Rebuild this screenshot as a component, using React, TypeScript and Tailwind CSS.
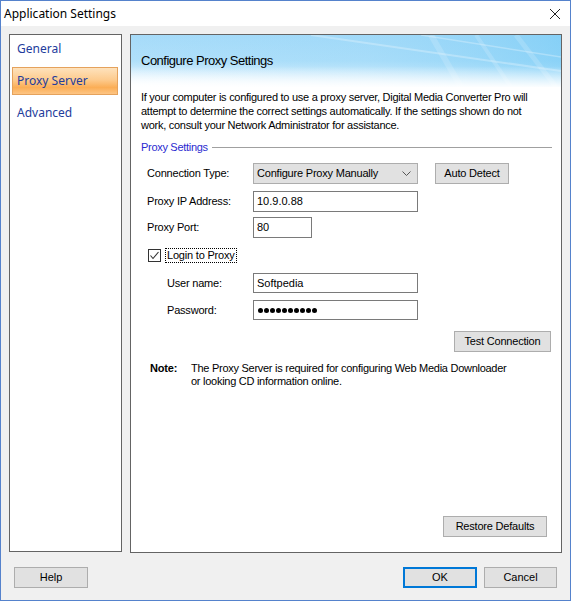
import React from "react";

const sans = { fontFamily: '"Liberation Sans", Arial, sans-serif' };
const ui = { fontFamily: '"Noto Sans", "Open Sans", sans-serif' };

function Btn({ children, className = "" }: { children: React.ReactNode; className?: string }) {
  return (
    <div
      className={`h-[21px] bg-[#e1e1e1] border border-[#adadad] flex items-center justify-center text-[11px] text-black ${className}`}
    >
      {children}
    </div>
  );
}

function Input({ children, className = "" }: { children?: React.ReactNode; className?: string }) {
  return (
    <div className={`h-[21px] bg-white border border-[#7a7a7a] flex items-center pl-[3px] text-[11px] text-black ${className}`}>
      {children}
    </div>
  );
}

export default function App() {
  return (
    <div
      className="w-[571px] h-[601px] bg-[#f0f0f0] border border-[#5582cc] flex flex-col overflow-hidden"
      style={sans}
    >
      {/* Title bar */}
      <div className="h-[25px] bg-white flex items-center justify-between pl-[3px] pr-[8px]">
        <span className="text-[12px] text-black" style={ui}>
          Application Settings
        </span>
        <svg width="12" height="12" viewBox="0 0 12 12" className="mr-[1px]">
          <path d="M1 1 L11 11 M11 1 L1 11" stroke="#222" strokeWidth="1" fill="none" />
        </svg>
      </div>

      {/* Main */}
      <div className="flex flex-row pt-[8px] px-[8px] gap-[8px]">
        {/* Left nav */}
        <div className="w-[113px] h-[518px] bg-white border border-[#646464] flex flex-col gap-[4px] text-[12px] text-[#233c9c]" style={ui}>
          <div className="h-[28px] flex items-center pl-[7px]">General</div>
          <div className="h-[28px] ml-[2px] mr-[3px] flex items-center pl-[4px] border border-[#e5a25c] bg-[linear-gradient(to_bottom,#fee2bc_0%,#fdcb8e_45%,#fbae56_75%,#fdc584_100%)]">
            Proxy Server
          </div>
          <div className="h-[28px] flex items-center pl-[7px]">Advanced</div>
        </div>

        {/* Right panel */}
        <div className="w-[432px] h-[519px] bg-white border border-[#646464] flex flex-col">
          {/* Header */}
          <div className="h-[52px] relative overflow-hidden bg-[linear-gradient(to_bottom,#a6dbf9_0%,#b0e0fa_50%,#d9f0fd_78%,#ffffff_100%)]">
            <svg className="absolute inset-0" width="430" height="52" viewBox="0 0 430 52">
              <defs>
                <linearGradient id="fadeR" x1="0" y1="0" x2="1" y2="0">
                  <stop offset="0" stopColor="#8fd3f7" stopOpacity="0" />
                  <stop offset="0.55" stopColor="#8fd3f7" stopOpacity="0.25" />
                  <stop offset="1" stopColor="#6cc7f5" stopOpacity="0.55" />
                </linearGradient>
                <linearGradient id="fadeB" x1="0" y1="0" x2="0" y2="1">
                  <stop offset="0" stopColor="#fff" stopOpacity="0" />
                  <stop offset="0.6" stopColor="#fff" stopOpacity="0" />
                  <stop offset="1" stopColor="#fff" stopOpacity="0.95" />
                </linearGradient>
              </defs>
              <rect x="0" y="0" width="430" height="52" fill="url(#fadeR)" />
              <path d="M180 0 L430 36" stroke="#eaf7fe" strokeWidth="2" opacity="0.35" />
              <path d="M290 0 L430 22" stroke="#eaf7fe" strokeWidth="1.5" opacity="0.35" />
              <path d="M300 0 L330 52" stroke="#eaf7fe" strokeWidth="6" opacity="0.2" />
              <path d="M345 0 L380 52" stroke="#eaf7fe" strokeWidth="4" opacity="0.2" />
              <path d="M385 0 L425 52" stroke="#eaf7fe" strokeWidth="5" opacity="0.2" />
              <rect x="0" y="0" width="430" height="52" fill="url(#fadeB)" />
            </svg>
            <div className="relative h-full flex items-center pl-[10px] pb-[1px] text-[13px] text-black tracking-[-0.5px]">
              Configure Proxy Settings
            </div>
          </div>

          {/* Description */}
          <div className="mt-[3px] px-[10px] text-[11px] leading-[14px] text-black tracking-[-0.27px] whitespace-nowrap">
            <div>If your computer is configured to use a proxy server, Digital Media Converter Pro will</div>
            <div>attempt to determine the correct settings automatically. If the settings shown do not</div>
            <div>work, consult your Network Administrator for assistance.</div>
          </div>

          {/* Group header */}
          <div className="mt-[8px] h-[14px] pl-[10px] pr-[9px] flex items-center gap-[4px]">
            <span className="text-[11px] text-[#2a2ad0] tracking-[-0.3px]">Proxy Settings</span>
            <div className="flex-1 h-px bg-[#a0a0a0]" />
          </div>

          {/* Connection type */}
          <div className="mt-[9px] h-[21px] pl-[16px] flex items-center text-[11px] text-black">
            <span className="w-[106px] tracking-[-0.2px]">Connection Type:</span>
            <div className="w-[165px] h-[21px] bg-[#e1e1e1] border border-[#adadad] flex items-center justify-between pl-[3px] pr-[6px] tracking-[-0.2px]">
              <span>Configure Proxy Manually</span>
              <svg width="9" height="6" viewBox="0 0 9 6">
                <path d="M0.5 0.5 L4.5 4.5 L8.5 0.5" stroke="#555" strokeWidth="1" fill="none" />
              </svg>
            </div>
            <Btn className="w-[74px] ml-[17px] tracking-[-0.2px]">Auto Detect</Btn>
          </div>

          {/* IP */}
          <div className="mt-[7px] h-[21px] pl-[16px] flex items-center text-[11px] text-black">
            <span className="w-[106px] tracking-[-0.2px]">Proxy IP Address:</span>
            <Input className="w-[165px]">10.9.0.88</Input>
          </div>

          {/* Port */}
          <div className="mt-[5px] h-[21px] pl-[16px] flex items-center text-[11px] text-black">
            <span className="w-[106px] tracking-[-0.2px]">Proxy Port:</span>
            <Input className="w-[59px]">80</Input>
          </div>

          {/* Checkbox */}
          <div className="mt-[10px] h-[15px] pl-[17px] flex items-center text-[11px] text-black">
            <div className="w-[13px] h-[13px] border border-[#333] bg-white flex items-center justify-center">
              <svg width="11" height="11" viewBox="0 0 11 11">
                <path d="M1.5 5.5 L4 8.5 L9.5 2" stroke="#333" strokeWidth="1.1" fill="none" />
              </svg>
            </div>
            <span className="ml-[4px] px-[1px] h-[15px] flex items-center border border-dotted border-black tracking-[-0.2px]">
              Login to Proxy
            </span>
          </div>

          {/* User name */}
          <div className="mt-[10px] h-[20px] pl-[36px] flex items-center text-[11px] text-black">
            <span className="w-[86px] tracking-[-0.2px]">User name:</span>
            <div className="w-[165px] h-[20px] bg-white border border-[#7a7a7a] flex items-center pl-[3px]">Softpedia</div>
          </div>

          {/* Password */}
          <div className="mt-[7px] h-[20px] pl-[36px] flex items-center text-[11px] text-black">
            <span className="w-[86px] tracking-[-0.2px]">Password:</span>
            <div className="w-[165px] h-[20px] bg-white border border-[#7a7a7a] flex items-center pl-[4px] gap-[1px]">
              {Array.from({ length: 10 }).map((_, i) => (
                <div key={i} className="w-[5px] h-[5px] rounded-full bg-black" />
              ))}
            </div>
          </div>

          {/* Test connection */}
          <div className="mt-[11px] flex justify-end pr-[10px]">
            <Btn className="w-[97px] tracking-[-0.2px]">Test Connection</Btn>
          </div>

          {/* Note */}
          <div className="mt-[10px] pl-[19px] flex text-[11px] leading-[13px] text-black">
            <span className="w-[41px] font-bold tracking-[-0.2px]">Note:</span>
            <div className="tracking-[-0.27px] whitespace-nowrap">
              <div>The Proxy Server is required for configuring Web Media Downloader</div>
              <div>or looking CD information online.</div>
            </div>
          </div>

          {/* Restore defaults */}
          <div className="mt-auto mb-[15px] flex justify-end pr-[14px]">
            <Btn className="w-[104px] tracking-[-0.2px]">Restore Defaults</Btn>
          </div>
        </div>
      </div>

      {/* Bottom buttons */}
      <div className="mt-[14px] flex items-center pl-[13px] pr-[13px]">
        <Btn className="w-[74px]">Help</Btn>
        <div className="flex-1" />
        <div className="w-[74px] h-[21px] bg-[#e1e1e1] border-2 border-[#0078d7] flex items-center justify-center text-[11px] text-black">
          OK
        </div>
        <Btn className="w-[73px] ml-[7px]">Cancel</Btn>
      </div>
    </div>
  );
}
